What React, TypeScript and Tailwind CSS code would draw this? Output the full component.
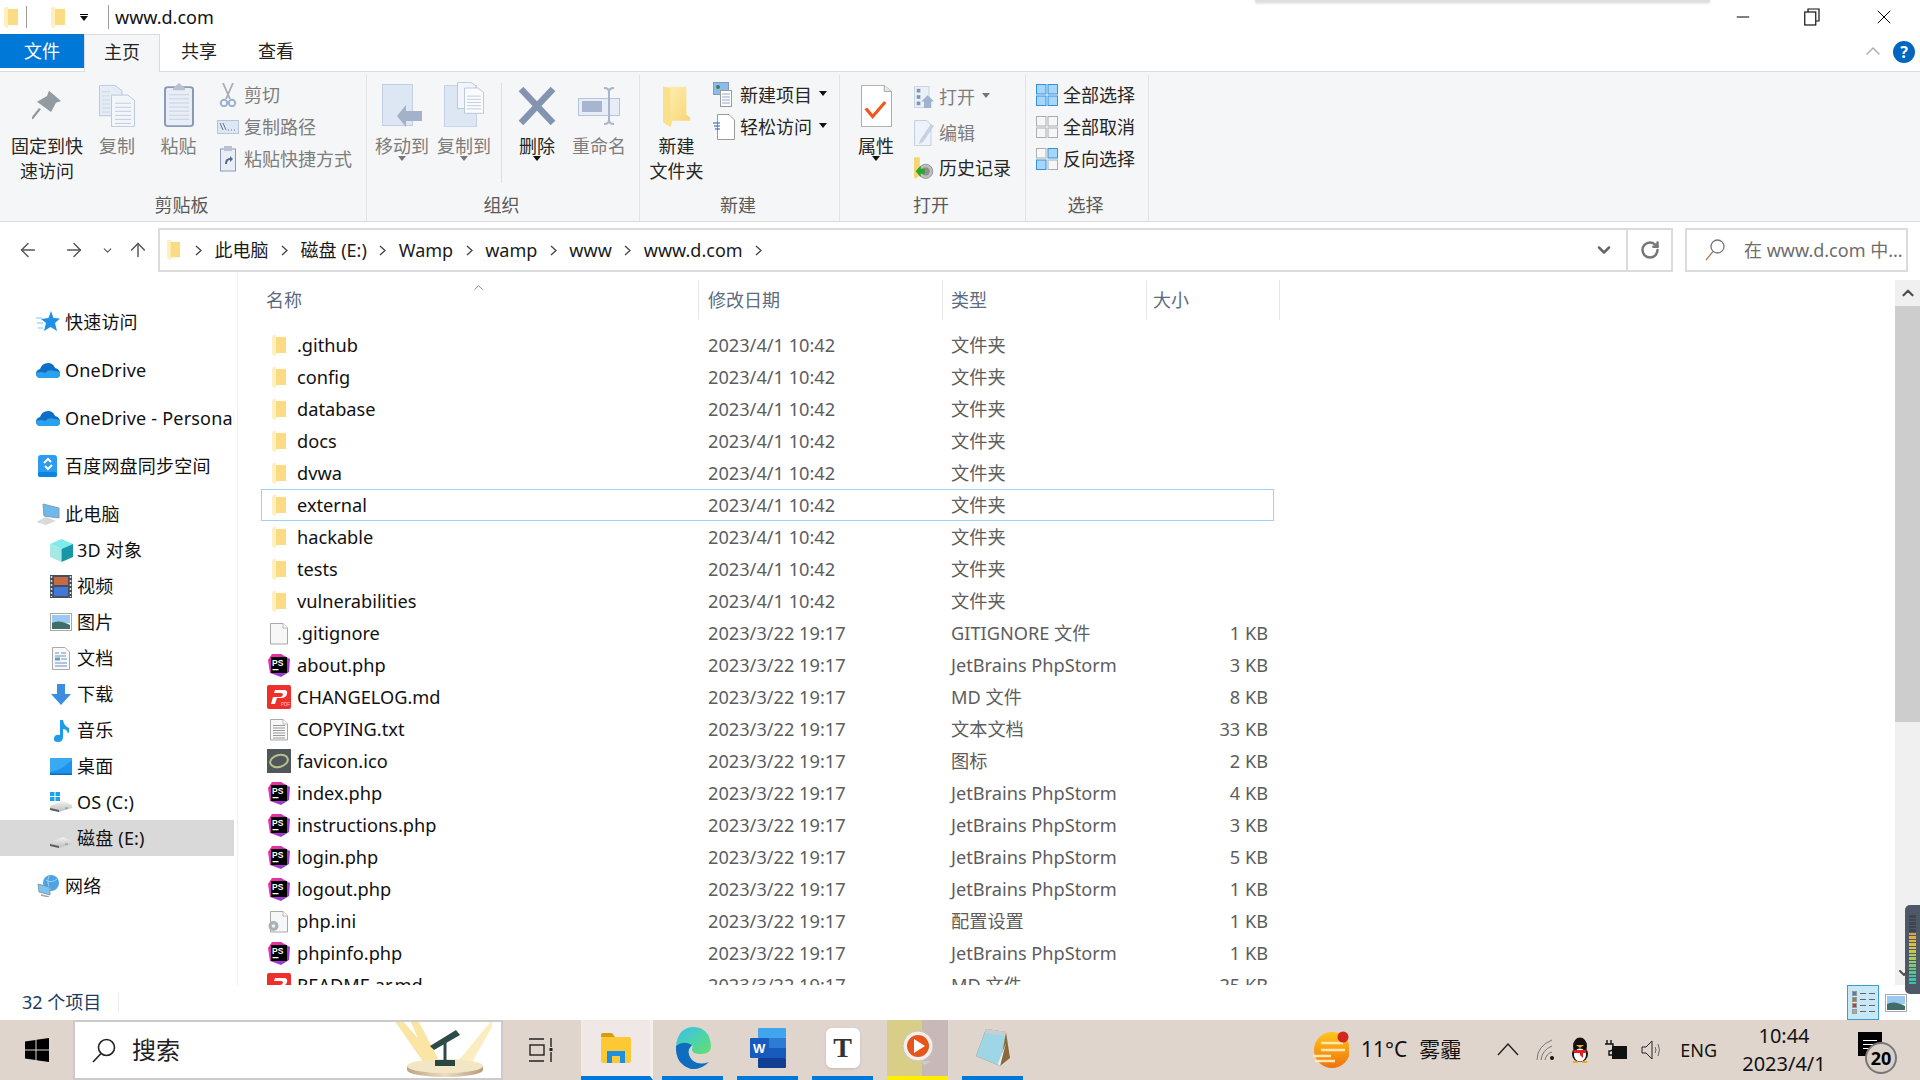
import type { ReactNode } from 'react';
import { ChevronDown, ChevronUp, Minus, X, ArrowLeft, ArrowRight, ArrowUp, RotateCw } from 'lucide-react';

const Defs = () => (
  <svg className="absolute w-0 h-0">
    <defs>
      <linearGradient id="fold" x1="0" y1="0" x2="1" y2="1">
        <stop offset="0" stopColor="#fff0b8" />
        <stop offset="1" stopColor="#f8d470" />
      </linearGradient>
      <linearGradient id="ps" x1="0" y1="0" x2="1" y2="1">
        <stop offset="0" stopColor="#ff2f92" />
        <stop offset="1" stopColor="#7d3cf0" />
      </linearGradient>
      <linearGradient id="drive" x1="0" y1="0" x2="0" y2="1">
        <stop offset="0" stopColor="#f2f2f2" />
        <stop offset="1" stopColor="#bdbdbd" />
      </linearGradient>
      <linearGradient id="edge" x1="0" y1="0" x2="1" y2="1">
        <stop offset="0" stopColor="#35c1f1" />
        <stop offset="1" stopColor="#64e06c" />
      </linearGradient>
      <linearGradient id="weather" x1="0" y1="0" x2="0" y2="1">
        <stop offset="0" stopColor="#ffc61a" />
        <stop offset="1" stopColor="#f0720f" />
      </linearGradient>
      <linearGradient id="stage" x1="0" y1="0" x2="1" y2="0">
        <stop offset="0" stopColor="#bba583" />
        <stop offset="0.5" stopColor="#eddcc0" />
        <stop offset="1" stopColor="#b49d7a" />
      </linearGradient>
    </defs>
  </svg>
);

const FolderIcon = ({ w = 14, h = 21 }: { w?: number; h?: number }) => (
  <svg width={w} height={h} viewBox="0 0 14 21" preserveAspectRatio="none">
    <path d="M0 1 L4 0 L4 2 L14 2 L14 18 L4 18 L4 21 L0 19 Z" fill="#fbdc85" />
    <path d="M0 1 L4 0 L4 21 L0 19 Z" fill="#fff0bd" />
  </svg>
);

const PsIcon = () => (
  <svg width="24" height="24" viewBox="0 0 24 24">
    <path d="M1 7 L5 1 L14 1 L23 6 L22 19 L14 24 L3 20 Z" fill="url(#ps)" />
    <rect x="4" y="4" width="16" height="16" fill="#000" />
    <text x="5" y="12.5" fontSize="8.5" fontWeight="700" fill="#fff" fontFamily="Liberation Sans">PS</text>
    <rect x="5.5" y="16" width="6" height="1.3" fill="#fff" />
  </svg>
);

const PdfIcon = () => (
  <svg width="24" height="24" viewBox="0 0 24 24">
    <rect width="24" height="24" rx="2" fill="#ee2f2a" />
    <path d="M8 5 H17 Q21 5 20 9 Q19 13 14 13 H10 L8 19 H4 L6 12 H13 Q15.5 12 16 9.5 Q16 8 14 8 H7 Z" fill="#fff" />
    <text x="14" y="21" fontSize="4.5" fill="#ffd0d0" fontFamily="Liberation Sans">PDF</text>
  </svg>
);

const BlankFile = ({ lines = false, gear = false }: { lines?: boolean; gear?: boolean }) => (
  <svg width="24" height="24" viewBox="0 0 24 24">
    <path d="M3.5 2.5 H16 L20.5 7 V23 H3.5 Z" fill="#f7f7f7" stroke="#a8a8a8" />
    <path d="M16 2.5 V7 H20.5" fill="#fff" stroke="#b8b8b8" />
    {lines && [8, 10.5, 13, 15.5, 18, 20.5].map((y) => <rect key={y} x="6" y={y} width="12" height="1" fill="#9a9a9a" />)}
    {gear && (
      <>
        <circle cx="6.5" cy="17" r="5" fill="#a9b0b7" />
        <circle cx="6.5" cy="17" r="1.8" fill="#eef0f2" />
      </>
    )}
  </svg>
);

const IcoIcon = () => (
  <svg width="24" height="24" viewBox="0 0 24 24">
    <rect width="24" height="24" fill="#50565a" />
    <ellipse cx="12" cy="12" rx="9" ry="6" fill="none" stroke="#b5c28c" strokeWidth="2" transform="rotate(-15 12 12)" />
  </svg>
);

const Cloud = () => (
  <svg width="24" height="17" viewBox="0 0 24 17">
    <path d="M5 16 Q0 16 0 11.5 Q0 8 4 7 Q6 1 12 1 Q17 1 19 6 Q24 7 24 12 Q24 16 20 16 Z" fill="#0f6fc6" />
    <path d="M5 16 Q0 16 0 11.5 Q4 9 9 11 Q13 7 18 9 Q24 9 24 12 Q24 16 20 16 Z" fill="#2aa3ee" />
  </svg>
);

const Star = () => (
  <svg width="24" height="22" viewBox="0 0 24 22">
    <path d="M15 0 L17.5 7 L24 7.5 L19 12 L21 20 L14.5 16 L8 20 L10 12 L5 8 L12.5 7 Z" fill="#1f8fe8" />
    <path d="M0 7 H6 M1 12 H7 M2 17 H7" stroke="#7cc3f5" strokeWidth="1.2" />
  </svg>
);

const Baidu = () => (
  <svg width="20" height="23" viewBox="0 0 20 23">
    <rect width="19" height="22" rx="3" fill="#2b9cf2" />
    <rect y="17" width="19" height="5" rx="2" fill="#0c84e0" />
    <path d="M6 8 L10 4 L13 7 M14 10 L10 14 L7 11" stroke="#fff" strokeWidth="2" fill="none" />
  </svg>
);

const Pc = () => (
  <svg width="24" height="22" viewBox="0 0 24 22">
    <path d="M7 1 L23 5 V15 L8 13 Z" fill="#6db9ee" stroke="#8c9aa6" />
    <path d="M0 19 L10 14 L20 18 L10 22 Z" fill="#d7dadd" />
  </svg>
);

const Cube = () => (
  <svg width="23" height="23" viewBox="0 0 23 23">
    <path d="M0 5 L11.5 0 L23 5 L11.5 10 Z" fill="#7eecea" />
    <path d="M0 5 L11.5 10 V23 L0 18 Z" fill="#a5e8e6" />
    <path d="M23 5 L11.5 10 V23 L23 18 Z" fill="#1797a8" />
  </svg>
);

const Film = () => (
  <svg width="22" height="23" viewBox="0 0 22 23">
    <rect width="22" height="23" fill="#454f5c" />
    <rect x="4" y="2" width="14" height="8" fill="#c66a46" />
    <rect x="4" y="12" width="14" height="9" fill="#3f78d8" />
    <path d="M1.5 1v21M20.5 1v21" stroke="#ddd" strokeWidth="1.5" strokeDasharray="2 2" />
  </svg>
);

const Pic = () => (
  <svg width="22" height="18" viewBox="0 0 22 18">
    <rect x="0.5" y="0.5" width="21" height="17" fill="#fff" stroke="#a8a8a8" />
    <rect x="2" y="2" width="18" height="8" fill="#9bc9f0" />
    <path d="M2 10 Q9 6 20 12 V16 H2 Z" fill="#3f6d68" />
  </svg>
);

const Doc = () => (
  <svg width="18" height="23" viewBox="0 0 18 23">
    <path d="M.5.5 H13 L17.5 5 V22.5 H.5 Z" fill="#f8f8f8" stroke="#a9a9a9" />
    <path d="M3 6 H7 M9 6 H14 M3 9 H14 M9 12 H15 M3 16 H15 M3 19 H15" stroke="#6b93bd" />
    <rect x="3" y="10.5" width="5" height="3" fill="#5aa0d0" />
  </svg>
);

const DownArrow = () => (
  <svg width="20" height="21" viewBox="0 0 20 21">
    <path d="M6 0 H14 V10 H20 L10 21 L0 10 H6 Z" fill="#3a8de0" />
  </svg>
);

const Note = () => (
  <svg width="17" height="23" viewBox="0 0 17 23">
    <path d="M7 1 H10 Q11 7 16 9 Q17 12 15 15 Q14 10 10 10 V18 Q10 23 5 23 Q0 23 1 19 Q2 15 7 16 Z" fill="#1f9ce8" />
  </svg>
);

const Desk = () => (
  <svg width="22" height="17" viewBox="0 0 22 17">
    <rect width="22" height="17" fill="#1d93ee" />
    <path d="M0 14 Q12 12 22 2 V0 H0 Z" fill="#3aa9f3" />
    <rect y="15.5" width="22" height="1.5" fill="#0e6fb8" />
  </svg>
);

const Drive = ({ win = false }: { win?: boolean }) => (
  <svg width="22" height="20" viewBox="0 0 22 20">
    {win && (
      <g fill="#19a4ea">
        <rect x="0" y="0" width="4.5" height="4" />
        <rect x="5.5" y="0" width="4.5" height="4" />
        <rect x="0" y="5" width="4.5" height="4" />
        <rect x="5.5" y="5" width="4.5" height="4" />
      </g>
    )}
    <path d="M0 14 L13 9 L22 13 V16 L9 20 L0 18 Z" fill="url(#drive)" />
    <path d="M0 16 L0 18 L9 20 L9 18 Z" fill="#5d5d5d" />
    <rect x="15" y="15.5" width="3" height="1.2" fill="#5db46a" />
  </svg>
);

const Net = () => (
  <svg width="23" height="22" viewBox="0 0 23 22">
    <circle cx="14" cy="8" r="8" fill="#4ba3e3" />
    <path d="M9 5 Q14 9 20 4 M12 1 Q9 8 14 15" stroke="#9fd1f2" fill="none" />
    <path d="M1 9 L13 12 V20 L2 17 Z" fill="#7cc2ee" stroke="#6d8595" strokeWidth=".7" />
    <path d="M4 20 L12 22" stroke="#9aa6ae" strokeWidth="1.5" />
  </svg>
);

const Tri = ({ color = '#111' }: { color?: string }) => (
  <svg width="8" height="5" viewBox="0 0 8 5">
    <path d="M0 0 H8 L4 5 Z" fill={color} />
  </svg>
);

const Pin = () => (
  <svg width="30" height="32" viewBox="0 0 30 38" preserveAspectRatio="none" className="mb-[5px]">
    <path d="M17 1 L29 13 L24 15 L19 26 L5 14 L15 7 Z" fill="#929ba1" />
    <path d="M8 22 L0 34" stroke="#929ba1" strokeWidth="2.5" />
  </svg>
);

const Pages = () => (
  <svg width="36" height="42" viewBox="0 0 36 52" preserveAspectRatio="none">
    <path d="M.5.5 H16 L23 7 V38 H.5 Z" fill="#e6ecf5" stroke="#b6c4da" />
    <path d="M12.5 12.5 H29 L35.5 19 V51.5 H12.5 Z" fill="#f2f5fa" stroke="#b6c4da" />
    {[22, 27, 32, 37, 42, 47].map((y) => <rect key={y} x="16" y={y} width="16" height="1" fill="#b6c4da" />)}
    {[8, 13, 18, 23, 28, 33].map((y) => <rect key={y} x="3" y={y} width="8" height="1" fill="#c4d0e2" />)}
  </svg>
);

const Clipboard = () => (
  <svg width="30" height="44" viewBox="0 0 30 54" preserveAspectRatio="none">
    <rect x="1" y="5" width="28" height="48" rx="3" fill="#e9eef6" stroke="#8b9ab4" strokeWidth="2" />
    <path d="M9 6 L15 0 L21 6 V9 H9 Z" fill="#b8c2d2" />
    {[14, 19, 24, 29, 34, 39, 44].map((y) => <rect key={y} x="5" y={y} width="20" height="1" fill="#bfcce0" />)}
  </svg>
);

const MoveTo = () => (
  <svg width="40" height="43" viewBox="0 0 40 43">
    <rect x=".5" y=".5" width="30" height="41" fill="#dde6f3" stroke="#c3d0e4" />
    <path d="M15 32 L24 21 V27 H40 V37 H24 V43 Z" fill="#a3b1c9" />
  </svg>
);

const CopyTo = () => (
  <svg width="40" height="45" viewBox="0 0 40 56" preserveAspectRatio="none">
    <rect x=".5" y="4.5" width="32" height="51" fill="#dde6f3" stroke="#c3d0e4" />
    <path d="M13.5 .5 H27 L32 5 V33 H13.5 Z" fill="#f2f5fa" stroke="#b6c4da" />
    <path d="M20.5 7.5 H34 L39.5 13 V39 H20.5 Z" fill="#fafbfd" stroke="#b6c4da" />
    {[17, 21, 25, 29, 33].map((y) => <rect key={y} x="23" y={y} width="14" height="1" fill="#b6c4da" />)}
  </svg>
);

const Cross = () => (
  <svg width="38" height="38" viewBox="0 0 38 38" className="mb-[2px]">
    <path d="M3 2 L35 36 M35 2 L3 36" stroke="#8493b0" strokeWidth="6.5" />
  </svg>
);

const Rename = () => (
  <svg width="42" height="38" viewBox="0 0 42 38" className="mb-[2px]">
    <rect x=".5" y="11.5" width="41" height="17" fill="#e7edf6" stroke="#b6c4da" />
    <rect x="4" y="14" width="20" height="11" fill="#a7b6ce" />
    <path d="M26 1 Q31 1 31 5 V33 Q31 37 26 37 M36 1 Q31 1 31 5 M36 37 Q31 37 31 33" fill="none" stroke="#a7b6ce" strokeWidth="2" />
  </svg>
);

const BigFolder = () => (
  <svg width="28" height="41" viewBox="0 0 30 52" preserveAspectRatio="none">
    <path d="M0 1 H25 V36 L29 40 V44 H10 L8 52 L0 46 Z" fill="url(#fold)" />
    <path d="M0 1 L8 3 V52 L0 46 Z" fill="#fbe08c" />
  </svg>
);

const Props = () => (
  <svg width="31" height="42" viewBox="0 0 32 52" preserveAspectRatio="none">
    <path d="M.5.5 H24 L31.5 8 V51.5 H.5 Z" fill="#fff" stroke="#a0a0a0" />
    <path d="M24 .5 V8 H31.5" fill="#e8e8e8" stroke="#a0a0a0" />
    <path d="M5 29 L12 39 L25 21" fill="none" stroke="#f0561d" strokeWidth="3.5" />
  </svg>
);

const Scissors = () => (
  <svg width="18" height="24" viewBox="0 0 18 24">
    <path d="M4 0 L11 16 M14 0 L7 16" stroke="#a8acb4" strokeWidth="1.8" />
    <circle cx="5" cy="20" r="3.2" fill="none" stroke="#9db1cf" strokeWidth="2" />
    <circle cx="13" cy="20" r="3.2" fill="none" stroke="#9db1cf" strokeWidth="2" />
  </svg>
);

const PathIcon = () => (
  <svg width="22" height="14" viewBox="0 0 22 14">
    <rect x=".5" y=".5" width="21" height="13" fill="#dce6f4" stroke="#b6c4da" />
    <path d="M3 3 L6 10 M6 3 L9 10" stroke="#6b7280" />
    <path d="M11 10 H12 M14 10 H15 M17 10 H18" stroke="#6b7280" />
  </svg>
);

const ShortcutIcon = () => (
  <svg width="16" height="26" viewBox="0 0 16 26">
    <rect x=".5" y="3" width="15" height="22" fill="#e9eef6" stroke="#8b9ab4" />
    <rect x="4" y="0" width="8" height="5" fill="#b8c2d2" />
    <path d="M5 18 Q5 12 10 12 V10 L13 13 L10 16 V14 Q7 14 7 18 Z" fill="#56688a" />
  </svg>
);

const NewItem = () => (
  <svg width="22" height="26" viewBox="0 0 22 26">
    <rect x=".5" y=".5" width="15" height="12" fill="#8cbde8" stroke="#8b9ab4" />
    <rect x="7.5" y="8.5" width="11" height="16" fill="#fff" stroke="#9a9a9a" />
    <path d="M9 12 H17 M9 15 H17 M9 18 H17 M9 21 H17" stroke="#8fa5ca" />
    <circle cx="5" cy="5" r="2" fill="#4b7a53" />
  </svg>
);

const EasyIcon = () => (
  <svg width="22" height="26" viewBox="0 0 22 26">
    <path d="M4.5.5 H16 L21.5 6 V25.5 H4.5 Z" fill="#fff" stroke="#9a9a9a" />
    <path d="M0 9 H7 M1 12 H7 M2 15 H7" stroke="#1f5fa8" />
  </svg>
);

const OpenIcon = () => (
  <svg width="22" height="24" viewBox="0 0 22 24">
    <rect x=".5" y=".5" width="16" height="23" fill="#eaf0f8" stroke="#c3d0e4" />
    <rect x="3" y="3" width="4" height="4" fill="#8494ac" />
    <rect x="3" y="10" width="4" height="4" fill="#8494ac" />
    <rect x="3" y="17" width="4" height="4" fill="#8494ac" />
    <path d="M15 10 L22 17 H19 V24 H11 V17 H8 Z" fill="#9fb2cf" />
  </svg>
);

const EditIcon = () => (
  <svg width="20" height="26" viewBox="0 0 20 26">
    <path d="M.5.5 H13 L17 5 V25.5 H.5 Z" fill="#eef2f9" stroke="#c3d0e4" />
    <path d="M6 20 L17 4 L20 6 L9 22 L5 24 Z" fill="#c6d2e4" />
  </svg>
);

const History = () => (
  <svg width="24" height="26" viewBox="0 0 24 26">
    <path d="M0 0 H7 V22 L2 26 L0 24 Z" fill="#f5d675" />
    <circle cx="14" cy="17" r="8.5" fill="#bfbfbf" stroke="#8a8a8a" />
    <circle cx="14" cy="17" r="5" fill="#8f8f8f" />
    <path d="M2 17 L8 10 V14 H13 V20 H8 V24 Z" fill="#2aa52f" />
  </svg>
);

const Grid4 = ({ on }: { on: boolean[] }) => (
  <svg width="22" height="22" viewBox="0 0 22 22">
    {[
      [0, 0],
      [11.5, 0],
      [0, 11.5],
      [11.5, 11.5],
    ].map(([x, y], i) => (
      <rect
        key={i}
        x={x + 0.5}
        y={y + 0.5}
        width="9.5"
        height="9.5"
        fill={on[i] ? '#a8d6fb' : '#f5f6f7'}
        stroke={on[i] ? '#2e93e6' : '#aeaeae'}
      />
    ))}
  </svg>
);

const BigBtn = ({ icon, lines, w, faded, caret, ml }: { icon: ReactNode; lines: string[]; w: string; faded?: boolean; caret?: string; ml?: string }) => (
  <div className={`${w} ${ml ?? ''} flex flex-col items-center shrink-0`}>
    <div className="h-[47px] flex items-end justify-center">{icon}</div>
    <div className={`mt-[7px] text-[18px] leading-[25px] text-center whitespace-nowrap ${faded ? 'text-[#7d7d7d]' : 'text-[#262626]'}`}>
      {lines.map((l) => (
        <div key={l}>{l}</div>
      ))}
    </div>
    {caret && (
      <div className="-mt-[3px]">
        <Tri color={caret} />
      </div>
    )}
  </div>
);

const SmallBtn = ({ icon, label, faded, caret, h = 32, iconW = 22 }: { icon: ReactNode; label: string; faded?: boolean; caret?: string; h?: number; iconW?: number }) => (
  <div className="flex items-center whitespace-nowrap" style={{ height: h }}>
    <div className="flex justify-center shrink-0" style={{ width: iconW }}>
      {icon}
    </div>
    <span className={`ml-[5px] text-[18px] leading-none ${faded ? 'text-[#7d7d7d]' : 'text-[#262626]'}`}>{label}</span>
    {caret && (
      <span className="ml-[7px] mb-[3px]">
        <Tri color={caret} />
      </span>
    )}
  </div>
);

const Group = ({ w, label, children }: { w: string; label: string; children: ReactNode }) => (
  <div className={`${w} h-full shrink-0 flex flex-col border-r border-[#e1e3e6]`}>
    <div className="h-[118px] flex pt-[5px]">{children}</div>
    <div className="flex-1 flex justify-center pr-[3px] text-[18px] leading-[24px] text-[#5a5a5a]">{label}</div>
  </div>
);

const Ribbon = () => (
  <div className="h-[151px] bg-[#f5f6f7] border-y border-[#dadbdc] flex pt-[3px] shrink-0">
    <Group w="w-[367px]" label="剪贴板">
      <BigBtn w="w-[94px]" icon={<Pin />} lines={['固定到快', '速访问']} />
      <BigBtn w="w-[46px]" faded icon={<Pages />} lines={['复制']} />
      <BigBtn w="w-[77px]" faded icon={<Clipboard />} lines={['粘贴']} />
      <div className="-mt-[1px]">
        <SmallBtn faded icon={<Scissors />} label="剪切" />
        <SmallBtn faded icon={<PathIcon />} label="复制路径" />
        <SmallBtn faded icon={<ShortcutIcon />} label="粘贴快捷方式" />
      </div>
    </Group>
    <Group w="w-[273px]" label="组织">
      <BigBtn w="w-[70px]" faded caret="#777" icon={<MoveTo />} lines={['移动到']} />
      <BigBtn w="w-[54px]" faded caret="#777" icon={<CopyTo />} lines={['复制到']} />
      <div className="w-px h-[100px] bg-[#dcdee1] ml-[10px] mt-[3px]" />
      <BigBtn w="w-[54px]" ml="ml-[8px]" caret="#111" icon={<Cross />} lines={['删除']} />
      <BigBtn w="w-[54px]" ml="ml-[8px]" faded icon={<Rename />} lines={['重命名']} />
    </Group>
    <Group w="w-[200px]" label="新建">
      <BigBtn w="w-[73px]" icon={<BigFolder />} lines={['新建', '文件夹']} />
      <div className="-mt-[1px]">
        <SmallBtn icon={<NewItem />} label="新建项目" caret="#111" />
        <SmallBtn icon={<EasyIcon />} label="轻松访问" caret="#111" />
      </div>
    </Group>
    <Group w="w-[186px]" label="打开">
      <BigBtn w="w-[72px]" caret="#111" icon={<Props />} lines={['属性']} />
      <div className="-mt-[1px] ml-[2px]">
        <SmallBtn faded h={36} iconW={20} icon={<OpenIcon />} label="打开" caret="#777" />
        <SmallBtn faded h={35} iconW={20} icon={<EditIcon />} label="编辑" />
        <SmallBtn h={36} iconW={20} icon={<History />} label="历史记录" />
      </div>
    </Group>
    <Group w="w-[123px]" label="选择">
      <div className="-mt-[1px] pl-[10px]">
        <SmallBtn icon={<Grid4 on={[true, true, true, true]} />} label="全部选择" />
        <SmallBtn icon={<Grid4 on={[false, false, false, false]} />} label="全部取消" />
        <SmallBtn icon={<Grid4 on={[false, true, true, false]} />} label="反向选择" />
      </div>
    </Group>
  </div>
);

const crumbs = ['此电脑', '磁盘 (E:)', 'Wamp', 'wamp', 'www', 'www.d.com'];

const Chevron = () => (
  <svg width="7" height="11" viewBox="0 0 7 11" className="mx-[11px] shrink-0">
    <path d="M1 1 L6 5.5 L1 10" fill="none" stroke="#444" strokeWidth="1.3" />
  </svg>
);

const AddressRow = () => (
  <div className="h-[44px] mt-[6px] flex items-center shrink-0 relative">
    <div className="w-[158px] flex items-center text-[#555]">
      <ArrowLeft size={22} strokeWidth={1.6} className="ml-[17px]" />
      <ArrowRight size={22} strokeWidth={1.6} className="ml-[24px]" />
      <ChevronDown size={13} strokeWidth={2} className="ml-[16px]" />
      <ArrowUp size={22} strokeWidth={1.6} className="ml-[13px]" />
    </div>
    <div className="w-[1515px] h-full border-2 border-[#dadbdc] flex items-center">
      <div className="ml-[7px]">
        <FolderIcon w={13} h={20} />
      </div>
      <div className="ml-[4px] flex items-center text-[18px] text-[#1a1a1a] whitespace-nowrap">
        <Chevron />
        {crumbs.map((c) => (
          <span key={c} className="flex items-center">
            <span className="px-[1.5px]">{c}</span>
            <Chevron />
          </span>
        ))}
      </div>
      <div className="flex-1" />
      <ChevronDown size={20} strokeWidth={3} className="text-[#666] mr-[12px]" />
      <div className="w-[45px] h-full border-l-2 border-[#dadbdc] flex items-center justify-center">
        <RotateCw size={20} strokeWidth={3} className="text-[#777]" />
      </div>
    </div>
    <div className="ml-[12px] w-[223px] h-full border-2 border-[#dadbdc] flex items-center">
      <svg width="20" height="24" viewBox="0 0 20 24" className="ml-[18px]">
        <circle cx="12.5" cy="8.5" r="6.5" fill="none" stroke="#777" strokeWidth="1.3" />
        <path d="M8 13.5 L1 22" stroke="#b0805c" strokeWidth="1.3" />
      </svg>
      <span className="ml-[19px] text-[18px] text-[#6d6d6d] whitespace-nowrap">在 www.d.com 中...</span>
    </div>
  </div>
);

type NavItem = { icon: ReactNode; label: string; sub?: boolean; gap?: boolean; active?: boolean };

const navItems: NavItem[] = [
  { icon: <Star />, label: '快速访问' },
  { icon: <Cloud />, label: 'OneDrive', gap: true },
  { icon: <Cloud />, label: 'OneDrive - Personal', gap: true },
  { icon: <Baidu />, label: '百度网盘同步空间', gap: true },
  { icon: <Pc />, label: '此电脑', gap: true },
  { icon: <Cube />, label: '3D 对象', sub: true },
  { icon: <Film />, label: '视频', sub: true },
  { icon: <Pic />, label: '图片', sub: true },
  { icon: <Doc />, label: '文档', sub: true },
  { icon: <DownArrow />, label: '下载', sub: true },
  { icon: <Note />, label: '音乐', sub: true },
  { icon: <Desk />, label: '桌面', sub: true },
  { icon: <Drive win />, label: 'OS (C:)', sub: true },
  { icon: <Drive />, label: '磁盘 (E:)', sub: true, active: true },
  { icon: <Net />, label: '网络', gap: true },
];

const Sidebar = () => (
  <div className="w-[234px] shrink-0 pt-[32px] overflow-hidden">
    {navItems.map((n) => (
      <div
        key={n.label}
        className={`h-[36px] flex items-center whitespace-nowrap text-[18px] tracking-[0.2px] text-[#111] ${n.sub ? 'pl-[49px]' : 'pl-[36px]'} ${n.gap ? 'mt-[12px]' : ''} ${n.active ? 'bg-[#d9d9d9]' : ''}`}
      >
        <span className="w-[24px] flex justify-center shrink-0">{n.icon}</span>
        <span className={n.sub ? 'ml-[4px]' : 'ml-[5px]'}>{n.label}</span>
      </div>
    ))}
  </div>
);

type Row = { name: string; icon: 'folder' | 'ps' | 'pdf' | 'blank' | 'txt' | 'ico' | 'ini'; date: string; type: string; size?: string };

const folderDate = '2023/4/1 10:42';
const fileDate = '2023/3/22 19:17';
const psType = 'JetBrains PhpStorm';

const rows: Row[] = [
  { name: '.github', icon: 'folder', date: folderDate, type: '文件夹' },
  { name: 'config', icon: 'folder', date: folderDate, type: '文件夹' },
  { name: 'database', icon: 'folder', date: folderDate, type: '文件夹' },
  { name: 'docs', icon: 'folder', date: folderDate, type: '文件夹' },
  { name: 'dvwa', icon: 'folder', date: folderDate, type: '文件夹' },
  { name: 'external', icon: 'folder', date: folderDate, type: '文件夹' },
  { name: 'hackable', icon: 'folder', date: folderDate, type: '文件夹' },
  { name: 'tests', icon: 'folder', date: folderDate, type: '文件夹' },
  { name: 'vulnerabilities', icon: 'folder', date: folderDate, type: '文件夹' },
  { name: '.gitignore', icon: 'blank', date: fileDate, type: 'GITIGNORE 文件', size: '1 KB' },
  { name: 'about.php', icon: 'ps', date: fileDate, type: psType, size: '3 KB' },
  { name: 'CHANGELOG.md', icon: 'pdf', date: fileDate, type: 'MD 文件', size: '8 KB' },
  { name: 'COPYING.txt', icon: 'txt', date: fileDate, type: '文本文档', size: '33 KB' },
  { name: 'favicon.ico', icon: 'ico', date: fileDate, type: '图标', size: '2 KB' },
  { name: 'index.php', icon: 'ps', date: fileDate, type: psType, size: '4 KB' },
  { name: 'instructions.php', icon: 'ps', date: fileDate, type: psType, size: '3 KB' },
  { name: 'login.php', icon: 'ps', date: fileDate, type: psType, size: '5 KB' },
  { name: 'logout.php', icon: 'ps', date: fileDate, type: psType, size: '1 KB' },
  { name: 'php.ini', icon: 'ini', date: fileDate, type: '配置设置', size: '1 KB' },
  { name: 'phpinfo.php', icon: 'ps', date: fileDate, type: psType, size: '1 KB' },
  { name: 'README.ar.md', icon: 'pdf', date: fileDate, type: 'MD 文件', size: '25 KB' },
];

const RowIcon = ({ icon }: { icon: Row['icon'] }) => {
  if (icon === 'folder') return <FolderIcon />;
  if (icon === 'ps') return <PsIcon />;
  if (icon === 'pdf') return <PdfIcon />;
  if (icon === 'txt') return <BlankFile lines />;
  if (icon === 'ini') return <BlankFile gear />;
  if (icon === 'ico') return <IcoIcon />;
  return <BlankFile />;
};

const headers = [
  { label: '名称', w: 'w-[459px]', pl: 'pl-[26px]' },
  { label: '修改日期', w: 'w-[244px]', pl: 'pl-[9px]' },
  { label: '类型', w: 'w-[204px]', pl: 'pl-[8px]' },
  { label: '大小', w: 'w-[133px]', pl: 'pl-[6px]' },
];

const FileList = () => (
  <div className="flex-1 relative overflow-hidden">
    <div className="h-[40px] mt-[8px] flex items-center text-[18px] text-[#5b6b80]">
      {headers.map((h) => (
        <div key={h.label} className={`${h.w} ${h.pl} h-full flex items-center border-r border-[#e5e5e5]`}>
          {h.label}
        </div>
      ))}
    </div>
    <div className="absolute left-[231px] top-[8px]">
      <ChevronUp size={15} strokeWidth={1.4} className="text-[#777]" />
    </div>
    <div className="mt-[9px]">
      {rows.map((r) => (
        <div
          key={r.name}
          className={`ml-[21px] w-[1013px] h-[32px] flex items-center border text-[18.2px] leading-[28px] ${r.name === 'external' ? 'border-[#99d1ff]' : 'border-transparent'}`}
        >
          <div className="w-[437px] flex items-center shrink-0">
            <span className="ml-[5px] w-[24px] flex justify-center shrink-0">
              <RowIcon icon={r.icon} />
            </span>
            <span className="ml-[6px] text-[#111] whitespace-nowrap">{r.name}</span>
          </div>
          <div className="w-[243px] shrink-0 pl-[9px] text-[#5d5d5d] whitespace-nowrap">{r.date}</div>
          <div className="w-[204px] shrink-0 pl-[9px] text-[#5d5d5d] whitespace-nowrap">{r.type}</div>
          <div className="flex-1 pr-[5px] text-right text-[#5d5d5d] whitespace-nowrap">{r.size}</div>
        </div>
      ))}
    </div>
  </div>
);

const Scrollbar = () => (
  <div className="w-[25px] shrink-0 bg-[#f0f0f0] flex flex-col mt-[8px]">
    <div className="h-[26px] flex items-center justify-center">
      <ChevronUp size={18} strokeWidth={3} className="text-[#505050]" />
    </div>
    <div className="h-[416px] bg-[#cdcdcd]" />
  </div>
);

const StatusBar = () => (
  <div className="h-[35px] flex items-center shrink-0 relative">
    <span className="ml-[22px] text-[18px] text-[#1c3b63]">32 个项目</span>
    <div className="ml-[17px] w-px h-[20px] bg-[#ececec]" />
    <div className="flex-1" />
    <div className="w-[32px] h-[35px] bg-[#c9e8f7] border border-[#3a9dd0] flex flex-col items-center justify-center gap-[1px]">
      {['#4a7fc1', '#8a8a3a', '#c43a2f', '#9ab0a0'].map((c) => (
        <div key={c} className="flex items-center gap-[3px]">
          <span className="w-[5px] h-[5px] border border-[#999] bg-white flex items-center justify-center">
            <span className="w-[3px] h-[3px]" style={{ background: c }} />
          </span>
          <span className="w-[6px] h-px bg-[#666]" />
          <span className="w-[6px] h-px bg-[#666]" />
        </div>
      ))}
    </div>
    <div className="ml-[6px] mr-[13px] w-[22px]">
      <Pic />
    </div>
  </div>
);

const Meter = () => (
  <>
    <div className="absolute right-0 top-[905px] w-[15px] h-[89px] bg-[#4f5866] rounded-l-[5px] flex flex-col items-center pt-[10px] gap-[1px]">
      {['#3e4650', '#3e4650', '#3e4650', '#3e4650', '#3e4650', '#e0a03a', '#e0b03a', '#dcb83a', '#d8c03f', '#cfc546', '#c6c84e', '#b8ca58', '#a8cc60', '#98cc68', '#7fc874', '#66c680', '#58c48c', '#4cc29a', '#42c0a4', '#3cbeaa'].map((c, i) => (
        <div key={i} className="w-[7px] h-[2.5px]" style={{ background: c }} />
      ))}
    </div>
    <ChevronDown size={16} strokeWidth={3} className="absolute left-[1896px] top-[965px] text-[#505050]" />
  </>
);

const TrayIcons = () => (
  <>
    <svg width="24" height="14" viewBox="0 0 24 14">
      <path d="M2 13 L12 2 L22 13" fill="none" stroke="#222" strokeWidth="1.4" transform="translate(0 -1)" />
    </svg>
    <svg width="20" height="22" viewBox="0 0 20 22" className="ml-[16px]">
      <path d="M1 21 Q1 7 16 1 M5 21 Q6 11 16 7 M9 21 Q10 15 16 13" fill="none" stroke="#777" />
      <circle cx="16" cy="19" r="2" fill="#111" />
    </svg>
    <svg width="20" height="26" viewBox="0 0 20 26" className="ml-[14px]">
      <ellipse cx="10" cy="9" rx="7" ry="8.5" fill="#111" />
      <ellipse cx="10" cy="17" rx="8" ry="8" fill="#111" />
      <ellipse cx="10" cy="18" rx="6" ry="6.5" fill="#fff" />
      <path d="M3 13 H17 L15 16 H13 V21 L10 18 V16 H4 Z" fill="#e02020" />
      <path d="M6 8 L10 11 L14 8 Z" fill="#f5a623" />
      <path d="M3 25 H8 M12 25 H17" stroke="#f5a623" strokeWidth="2" />
    </svg>
    <svg width="24" height="20" viewBox="0 0 24 20" className="ml-[14px]">
      <path d="M3 0 V4 M7 0 V4 M1 4 H9 V8 Q9 11 5 11 V15 H9" fill="none" stroke="#111" strokeWidth="1.4" />
      <rect x="8" y="6" width="15" height="13" fill="#111" />
    </svg>
    <svg width="22" height="22" viewBox="0 0 22 22" className="ml-[13px]">
      <path d="M1 8 H5 L11 2 V20 L5 14 H1 Z" fill="none" stroke="#222" />
      <path d="M14 8 Q16 11 14 14 M17 5 Q20 11 17 17" fill="none" stroke="#666" />
    </svg>
  </>
);

const TaskIcon = ({ children, ml, w }: { children: ReactNode; ml: string; w: string }) => (
  <div className={`${ml} ${w} border-b-[4px] border-b-[#0078d7] flex items-center justify-center`}>{children}</div>
);

const Taskbar = () => (
  <div className="h-[60px] shrink-0 bg-[#e0d5cd] flex items-stretch relative">
    <div className="w-[73px] flex items-center justify-center">
      <svg width="24" height="24" viewBox="0 0 24 24">
        <path d="M0 3.5 L10.5 2 V11.5 H0 Z M11.5 1.8 L24 0 V11.5 H11.5 Z M0 12.5 H10.5 V22 L0 20.5 Z M11.5 12.5 H24 V24 L11.5 22.2 Z" fill="#000" />
      </svg>
    </div>
    <div className="w-[430px] bg-white border-2 border-[#cbcbcb] flex items-center relative overflow-hidden">
      <svg width="26" height="26" viewBox="0 0 26 26" className="ml-[16px]">
        <circle cx="15.5" cy="10.5" r="8" fill="none" stroke="#222" strokeWidth="1.6" />
        <path d="M10 16.5 L2 25" stroke="#222" strokeWidth="1.6" />
      </svg>
      <span className="ml-[15px] text-[24px] text-[#222]">搜索</span>
      <svg width="100" height="58" viewBox="0 0 100 58" className="absolute right-[9px] top-0">
        <path d="M2 -2 L34 44 L50 44 L10 -2 Z M18 -2 L38 44 L50 44 L26 -2 Z" fill="#fbe29a" opacity=".9" />
        <path d="M100 -2 L62 44 L78 44 L104 -2 Z" fill="#fcedc0" />
        <ellipse cx="53" cy="44" rx="38" ry="7" fill="#f3e6c4" />
        <path d="M15 44 A38 7 0 0 0 91 44 V48 A38 7 0 0 1 15 48 Z" fill="url(#stage)" />
        <path d="M53 42 V18" stroke="#2e4a48" strokeWidth="3" />
        <path d="M38 24 L64 8 L68 13 L42 28 Z" fill="#2e4a48" />
        <rect x="43" y="38" width="20" height="6" fill="#2a4644" />
      </svg>
    </div>
    <div className="w-[78px] flex items-center justify-center">
      <svg width="26" height="26" viewBox="0 0 26 26">
        <path d="M0 2 H15 M0 24 H15" stroke="#222" strokeWidth="1.4" />
        <rect x="1" y="8" width="14" height="10" fill="none" stroke="#222" strokeWidth="1.4" />
        <path d="M22 1 V10 M22 15 V25" stroke="#222" strokeWidth="1.4" />
        <rect x="20.5" y="11" width="3" height="3" fill="#222" />
      </svg>
    </div>
    <div className="w-[72px] bg-[#efe8e6] border-r-[3px] border-[#f5f0ee] border-b-[4px] border-b-[#0078d7] flex items-center justify-center">
      <svg width="32" height="32" viewBox="0 0 32 32">
        <path d="M1 3 Q1 1 3 1 H12 L15 5 H1 Z" fill="#d99a10" />
        <rect x="1" y="5" width="30" height="26" rx="2" fill="#fcc934" />
        <path d="M7 31 V19 H25 V31 H20 V24 H12 V31 Z" fill="#1d8fe0" />
      </svg>
    </div>
    <TaskIcon ml="ml-[9px]" w="w-[61px]">
      <svg width="36" height="44" viewBox="0 0 36 44">
        <path d="M1 20 Q3 1 19 1 Q35 2 36 20 Q36 28 26 28 Q14 28 18 20 Q8 16 1 20 Z" fill="url(#edge)" />
        <path d="M1 20 Q8 14 17 19 Q10 26 17 34 Q24 40 34 36 Q26 44 16 43 Q0 38 1 20 Z" fill="#0f6dbf" />
      </svg>
    </TaskIcon>
    <TaskIcon ml="ml-[14px]" w="w-[61px]">
      <svg width="36" height="40" viewBox="0 0 36 40">
        <rect x="8" y="0" width="28" height="10" rx="1" fill="#41a5ee" />
        <rect x="8" y="10" width="28" height="10" fill="#2b7cd3" />
        <rect x="8" y="20" width="28" height="10" fill="#185abd" />
        <rect x="8" y="30" width="28" height="10" rx="1" fill="#103f91" />
        <rect x="0" y="10" width="19" height="20" rx="1" fill="#185abd" />
        <text x="3" y="25" fontSize="13" fontWeight="700" fill="#fff" fontFamily="Liberation Sans">W</text>
      </svg>
    </TaskIcon>
    <TaskIcon ml="ml-[14px]" w="w-[61px]">
      <div className="w-[34px] h-[40px] bg-white rounded-[6px] flex items-center justify-center font-['Liberation_Serif',serif] font-bold text-[28px] text-[#333] shadow-sm">T</div>
    </TaskIcon>
    <div className="ml-[14px] w-[61px] flex border-b-[4px] border-b-[#ffee00] relative">
      <div className="w-[35px] bg-[#d9ce88]" />
      <div className="flex-1 bg-[#c8b9b8]" />
      <div className="absolute inset-0 flex items-center justify-center">
        <svg width="30" height="36" viewBox="0 0 30 36">
          <circle cx="15" cy="16" r="15" fill="#f2efec" stroke="#c9c4c0" />
          <circle cx="15" cy="16" r="11" fill="#e8551a" />
          <path d="M11 9 L22 16 L11 23 Z" fill="#fff" />
          <path d="M18 31 H28 L22 35 Z" fill="#cfcac6" />
        </svg>
      </div>
    </div>
    <TaskIcon ml="ml-[14px]" w="w-[61px]">
      <svg width="34" height="40" viewBox="0 0 34 40">
        <path d="M10 1 L30 4 L34 30 L24 38 L0 28 Z" fill="#8a6a3a" />
        <path d="M10 1 L30 4 L24 38 L0 28 Z" fill="#9fd6e6" />
        <path d="M10 1 L30 4 L29 8 L9 5 Z" fill="#c8cdd2" />
        <path d="M22 36 L30 15 L24 38 Z" fill="#eef3f5" />
      </svg>
    </TaskIcon>
    <div className="flex-1" />
    <div className="flex items-center">
      <svg width="36" height="38" viewBox="0 0 36 38">
        <circle cx="19" cy="19" r="18" fill="url(#weather)" />
        <path d="M0 25 H18 M2 30 H22 M8 12 H30 M8 19 H32" stroke="#ffe9b0" strokeWidth="2.5" />
        <circle cx="30" cy="6" r="5.5" fill="#d3261e" />
      </svg>
      <span className="ml-[12px] text-[21px] text-[#111]">11°C</span>
      <span className="ml-[12px] text-[21px] text-[#111]">雾霾</span>
      <span className="ml-[35px] flex items-center">
        <TrayIcons />
      </span>
      <span className="ml-[17px] text-[18px] text-[#111]">ENG</span>
      <div className="ml-[24px] w-[86px] flex flex-col items-center text-[20px] leading-[28px] text-[#111]">
        <span>10:44</span>
        <span>2023/4/1</span>
      </div>
      <div className="ml-[29px] mr-[28px] relative w-[36px] h-[40px]">
        <div className="absolute left-[2px] top-[2px] w-[24px] h-[24px] bg-black flex flex-col items-center justify-center gap-[3px]">
          <span className="w-[14px] h-px bg-white" />
          <span className="w-[14px] h-px bg-white" />
          <span className="w-[14px] h-px bg-white" />
        </div>
        <div className="absolute left-[9px] top-[12px] w-[32px] h-[32px] rounded-full bg-[#d9d0ca] border-2 border-[#777] flex items-center justify-center text-[18px] font-bold text-black">20</div>
      </div>
    </div>
  </div>
);

export default function App() {
  return (
    <div className="w-[1920px] h-[1080px] relative overflow-hidden bg-white flex flex-col font-['Noto_Sans','Noto_Sans_CJK_SC',sans-serif]">
      <Defs />
      {/* title bar */}
      <div className="h-[34px] flex items-center shrink-0 relative">
        <div className="ml-[4px]">
          <FolderIcon />
        </div>
        <div className="ml-[8px] w-px h-[22px] bg-[#9b9b9b]" />
        <div className="ml-[24px]">
          <FolderIcon />
        </div>
        <div className="ml-[15px] flex flex-col items-center gap-[1px]">
          <span className="w-[8px] h-px bg-black" />
          <Tri />
        </div>
        <div className="ml-[20px] w-px h-[24px] bg-[#9b9b9b]" />
        <span className="ml-[6px] text-[18px] text-[#111]">www.d.com</span>
        <div className="flex-1" />
        <Minus size={20} strokeWidth={1.2} className="text-black mr-[51px]" />
        <svg width="16" height="18" viewBox="0 0 16 18" className="mr-[52px]">
          <rect x=".75" y="4" width="11" height="13" fill="none" stroke="#111" strokeWidth="1.2" />
          <path d="M4 4 V1 H15 V13 H12" fill="none" stroke="#111" strokeWidth="1.2" />
        </svg>
        <X size={24} strokeWidth={1} className="text-black mr-[24px]" />
      </div>
      {/* window behind, only its shadow shows */}
      <div className="absolute left-[1255px] top-0 w-[455px] h-[2px] bg-[#dedede] shadow-[0_1px_3px_rgba(0,0,0,0.2)]" />
      {/* tabs */}
      <div className="h-[38px] flex shrink-0 text-[18px] relative z-10 -mb-px">
        <div className="w-[84px] h-[34px] bg-[#0078d7] text-white flex items-center justify-center">文件</div>
        <div className="w-[76px] h-[38px] bg-[#f5f6f7] border-x border-t border-[#dadbdc] text-[#222] flex items-center justify-center pb-[3px]">主页</div>
        <div className="w-[78px] h-[34px] text-[#222] flex items-center justify-center">共享</div>
        <div className="w-[76px] h-[34px] text-[#222] flex items-center justify-center">查看</div>
        <div className="flex-1" />
        <ChevronUp size={24} strokeWidth={1.4} className="text-[#aaa] mt-[5px]" />
        <div className="ml-[8px] mr-[5px] mt-[7px] w-[22px] h-[22px] rounded-full bg-[#0067c0] text-white flex items-center justify-center text-[16px] font-bold">?</div>
      </div>
      <Ribbon />
      <AddressRow />
      {/* main */}
      <div className="flex-1 flex min-h-0 overflow-hidden">
        <Sidebar />
        <div className="w-[6px] shrink-0 flex justify-center">
          <div className="w-px h-full bg-[#efefef]" />
        </div>
        <FileList />
        <Scrollbar />
      </div>
      <StatusBar />
      <Taskbar />
      <Meter />
    </div>
  );
}
